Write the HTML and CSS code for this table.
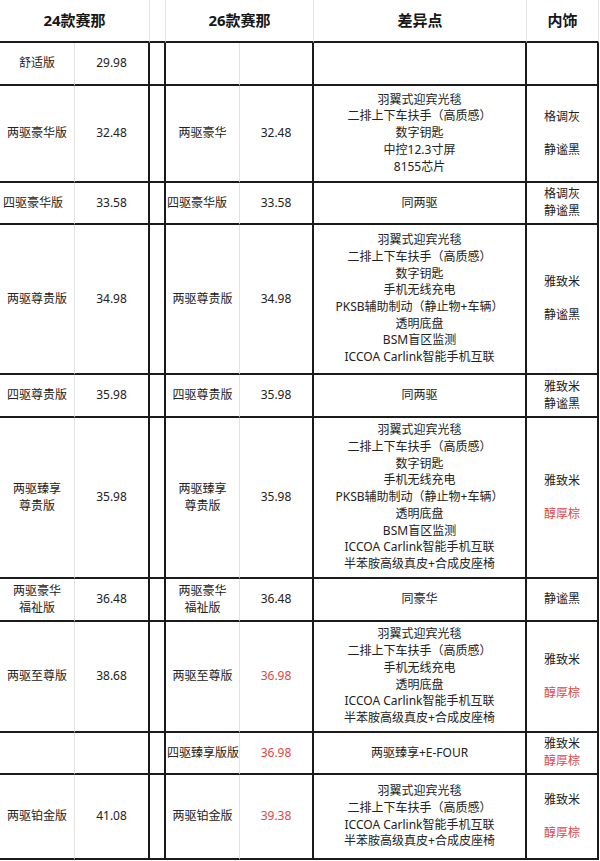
FILE: index.html
```html
<!DOCTYPE html>
<html lang="zh-CN">
<head>
<meta charset="utf-8">
<title>赛那对比</title>
<link rel="stylesheet" href="styles.css">
</head>
<body>
<div class="sheet">
  <div class="row r-head">
    <div class="cell hd span2">24款赛那</div>
    <div class="cell hd"></div>
    <div class="cell hd span2">26款赛那</div>
    <div class="cell hd">差异点</div>
    <div class="cell hd">内饰</div>
  </div>

  <div class="row r43">
    <div class="cell soft">舒适版</div>
    <div class="cell">29.98</div>
    <div class="cell"></div>
    <div class="cell soft"></div>
    <div class="cell"></div>
    <div class="cell"></div>
    <div class="cell"></div>
  </div>

  <div class="row r97">
    <div class="cell soft">两驱豪华版</div>
    <div class="cell">32.48</div>
    <div class="cell"></div>
    <div class="cell soft">两驱豪华</div>
    <div class="cell">32.48</div>
    <div class="cell"><div>羽翼式迎宾光毯</div><div>二排上下车扶手（高质感）</div><div>数字钥匙</div><div>中控12.3寸屏</div><div>8155芯片</div></div>
    <div class="cell"><div>格调灰</div><div class="blank"></div><div>静谧黑</div></div>
  </div>

  <div class="row r42">
    <div class="cell soft left1">四驱豪华版</div>
    <div class="cell">33.58</div>
    <div class="cell"></div>
    <div class="cell soft left4">四驱豪华版</div>
    <div class="cell">33.58</div>
    <div class="cell">同两驱</div>
    <div class="cell"><div>格调灰</div><div>静谧黑</div></div>
  </div>

  <div class="row r150">
    <div class="cell soft">两驱尊贵版</div>
    <div class="cell">34.98</div>
    <div class="cell"></div>
    <div class="cell soft">两驱尊贵版</div>
    <div class="cell">34.98</div>
    <div class="cell"><div>羽翼式迎宾光毯</div><div>二排上下车扶手（高质感）</div><div>数字钥匙</div><div>手机无线充电</div><div>PKSB辅助制动（静止物+车辆）</div><div>透明底盘</div><div>BSM盲区监测</div><div>ICCOA Carlink智能手机互联</div></div>
    <div class="cell"><div>雅致米</div><div class="blank"></div><div>静谧黑</div></div>
  </div>

  <div class="row r43">
    <div class="cell soft">四驱尊贵版</div>
    <div class="cell">35.98</div>
    <div class="cell"></div>
    <div class="cell soft">四驱尊贵版</div>
    <div class="cell">35.98</div>
    <div class="cell">同两驱</div>
    <div class="cell"><div>雅致米</div><div>静谧黑</div></div>
  </div>

  <div class="row r161">
    <div class="cell soft"><div>两驱臻享</div><div>尊贵版</div></div>
    <div class="cell">35.98</div>
    <div class="cell"></div>
    <div class="cell soft"><div>两驱臻享</div><div>尊贵版</div></div>
    <div class="cell">35.98</div>
    <div class="cell"><div>羽翼式迎宾光毯</div><div>二排上下车扶手（高质感）</div><div>数字钥匙</div><div>手机无线充电</div><div>PKSB辅助制动（静止物+车辆）</div><div>透明底盘</div><div>BSM盲区监测</div><div>ICCOA Carlink智能手机互联</div><div>半苯胺高级真皮+合成皮座椅</div></div>
    <div class="cell"><div>雅致米</div><div class="blank"></div><div class="red">醇厚棕</div></div>
  </div>

  <div class="row r43">
    <div class="cell soft"><div>两驱豪华</div><div>福祉版</div></div>
    <div class="cell">36.48</div>
    <div class="cell"></div>
    <div class="cell soft"><div>两驱豪华</div><div>福祉版</div></div>
    <div class="cell">36.48</div>
    <div class="cell">同豪华</div>
    <div class="cell">静谧黑</div>
  </div>

  <div class="row r111">
    <div class="cell soft">两驱至尊版</div>
    <div class="cell">38.68</div>
    <div class="cell"></div>
    <div class="cell soft">两驱至尊版</div>
    <div class="cell red">36.98</div>
    <div class="cell"><div>羽翼式迎宾光毯</div><div>二排上下车扶手（高质感）</div><div>手机无线充电</div><div>透明底盘</div><div>ICCOA Carlink智能手机互联</div><div>半苯胺高级真皮+合成皮座椅</div></div>
    <div class="cell"><div>雅致米</div><div class="blank"></div><div class="red">醇厚棕</div></div>
  </div>

  <div class="row r42">
    <div class="cell soft"></div>
    <div class="cell"></div>
    <div class="cell"></div>
    <div class="cell soft left4">四驱臻享版版</div>
    <div class="cell red">36.98</div>
    <div class="cell">两驱臻享+E-FOUR</div>
    <div class="cell"><div>雅致米</div><div class="red">醇厚棕</div></div>
  </div>

  <div class="row r85">
    <div class="cell soft">两驱铂金版</div>
    <div class="cell">41.08</div>
    <div class="cell"></div>
    <div class="cell soft">两驱铂金版</div>
    <div class="cell red">39.38</div>
    <div class="cell"><div>羽翼式迎宾光毯</div><div>二排上下车扶手（高质感）</div><div>ICCOA Carlink智能手机互联</div><div>半苯胺高级真皮+合成皮座椅</div></div>
    <div class="cell"><div>雅致米</div><div class="blank"></div><div class="red">醇厚棕</div></div>
  </div>
</div>
</body>
</html>
```

FILE: styles.css
```css
html, body {
  margin: 0;
  padding: 0;
  background: #ffffff;
}

.sheet {
  width: 599px;
  font-family: "Noto Sans", "Noto Sans CJK SC", sans-serif;
  font-size: 12px;
  line-height: 16.67px;
  color: #222222;
}

.row {
  display: grid;
  grid-template-columns: 75px 75px 16px 74px 74px 213px 72px;
}

.r-head { height: 43px; }
.r42 { height: 42px; }
.r43 { height: 43px; }
.r85 { height: 85px; }
.r97 { height: 97px; }
.r111 { height: 111px; }
.r150 { height: 150px; }
.r161 { height: 161px; }

.cell {
  box-sizing: border-box;
  border-right: 2px solid #1b1b1b;
  border-bottom: 2px solid #1b1b1b;
  display: flex;
  flex-direction: column;
  justify-content: center;
  align-items: center;
  text-align: center;
  white-space: nowrap;
  min-width: 0;
}

.cell.soft {
  border-right: 1px solid #e3e3e3;
}

.cell.hd {
  border-right: 1px solid #e6e6e6;
  font-family: "Noto Sans", "Noto Sans CJK SC", sans-serif;
  font-weight: 700;
  font-size: 15px;
  color: #161616;
}

.span2 {
  grid-column: span 2;
}

.left1 {
  align-items: flex-start;
  padding-left: 3px;
}

.left4 {
  align-items: flex-start;
  padding-left: 1px;
}

.blank {
  height: 16.67px;
}

.red {
  color: #e04646;
}
```
